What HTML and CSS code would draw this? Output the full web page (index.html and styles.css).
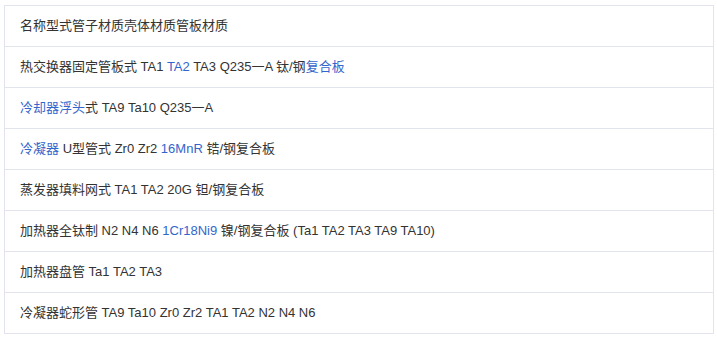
FILE: index.html
```html
<!DOCTYPE html>
<html lang="zh">
<head>
<meta charset="utf-8">
<link rel="stylesheet" href="styles.css">
</head>
<body>
<table class="spec">
  <tr><td>名称型式管子材质壳体材质管板材质</td></tr>
  <tr><td>热交换器固定管板式 TA1 <span class="link">TA2</span> TA3 Q235一A 钛/钢<span class="link">复合板</span></td></tr>
  <tr><td><span class="link">冷却器</span><span class="link">浮头</span>式 TA9 Ta10 Q235一A</td></tr>
  <tr><td><span class="link">冷凝器</span> U型管式 Zr0 Zr2 <span class="link">16MnR</span> 锆/钢复合板</td></tr>
  <tr><td>蒸发器填料网式 TA1 TA2 20G 钽/钢复合板</td></tr>
  <tr><td>加热器全钛制 N2 N4 N6 <span class="link">1Cr18Ni9</span> 镍/钢复合板 (Ta1 TA2 TA3 TA9 TA10)</td></tr>
  <tr><td>加热器盘管 Ta1 TA2 TA3</td></tr>
  <tr><td>冷凝器蛇形管 TA9 Ta10 Zr0 Zr2 TA1 TA2 N2 N4 N6</td></tr>
</table>
</body>
</html>
```
FILE: styles.css
```css
html, body {
  margin: 0;
  padding: 0;
  background: #ffffff;
}
body {
  padding: 5px 0 0 4px;
  font-family: "Liberation Sans", Arial, "Noto Sans CJK SC", sans-serif;
  font-size: 13px;
  color: #333333;
}
.spec {
  width: 710px;
  border-collapse: collapse;
  border: 1px solid #e1e3ed;
}
.spec td {
  height: 40px;
  padding: 0 0 0 15px;
  border-top: 1px solid #e1e3ed;
  line-height: 20px;
  vertical-align: middle;
  box-sizing: content-box;
}
.spec tr:first-child td {
  border-top: none;
}
.link {
  color: #3366cc;
}
```
